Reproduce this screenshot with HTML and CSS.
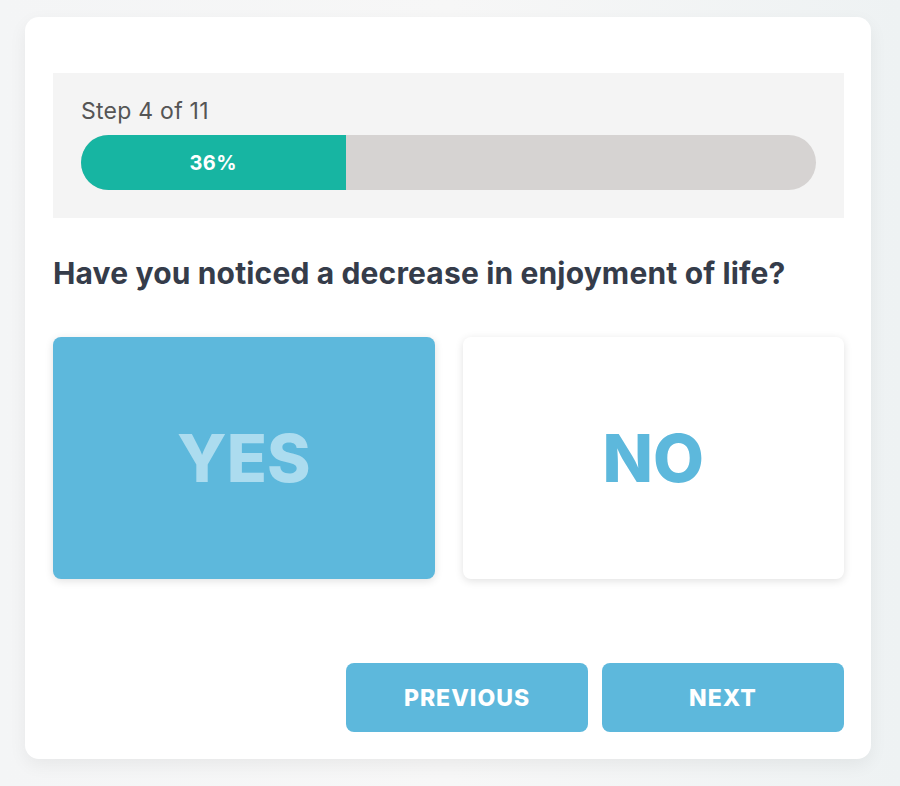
FILE: index.html
```html
<!DOCTYPE html>
<html>
<head>
<meta charset="utf-8">
<link rel="stylesheet" href="styles.css">
</head>
<body>
<div class="card">
  <div class="progress-panel">
    <div class="step">Step 4 of 11</div>
    <div class="track">
      <div class="fill" style="width:36%">36%</div>
    </div>
  </div>
  <h1 class="question">Have you noticed a decrease in enjoyment of life?</h1>
  <div class="options">
    <div class="option selected">YES</div>
    <div class="option">NO</div>
  </div>
  <div class="nav">
    <button class="btn">PREVIOUS</button>
    <button class="btn">NEXT</button>
  </div>
</div>
</body>
</html>
```

FILE: styles.css
```css
html, body {
  margin: 0;
  padding: 0;
}
body {
  width: 900px;
  height: 786px;
  overflow: hidden;
  background: linear-gradient(90deg, #f4f5f6 0%, #f7f7f7 50%, #eef2f3 100%);
  font-family: Inter, "Liberation Sans", sans-serif;
  padding-top: 17px;
  box-sizing: border-box;
}
.card {
  margin-left: 25px;
  width: 846px;
  height: 742px;
  box-sizing: border-box;
  background: #fff;
  border-radius: 14px;
  box-shadow: 0 6px 18px rgba(0,0,0,0.06);
  padding: 56px 27px 0 28px;
}
.progress-panel {
  background: #f4f4f4;
  height: 145px;
  box-sizing: border-box;
  padding: 24px 28px 0 28px;
}
.step {
  font-size: 23px;
  letter-spacing: 0.25px;
  color: #555;
  line-height: 28px;
  height: 38px;
}
.track {
  height: 55px;
  background: #d6d3d2;
  border-radius: 28px;
  overflow: hidden;
  display: flex;
}
.fill {
  background: #17b5a2;
  color: #fff;
  font-weight: 700;
  font-size: 20px;
  letter-spacing: 0.5px;
  display: flex;
  align-items: center;
  justify-content: center;
}
.question {
  margin: 37px 0 0 0;
  font-size: 30px;
  font-weight: 700;
  color: #353c4a;
  letter-spacing: 0.15px;
  line-height: 36px;
  height: 36px;
}
.options {
  margin-top: 46px;
  display: flex;
  gap: 28px;
}
.option {
  flex: 1;
  height: 242px;
  border-radius: 8px;
  background: #fff;
  box-shadow: 0 2px 8px rgba(0,0,0,0.12);
  display: flex;
  align-items: center;
  justify-content: center;
  font-size: 66px;
  font-weight: 800;
  color: #5db8dc;
}
.option.selected {
  background: #5db8dc;
  color: #acdcef;
}
.nav {
  margin-top: 84px;
  display: flex;
  justify-content: flex-end;
  gap: 14px;
}
.btn {
  width: 242px;
  height: 69px;
  border: none;
  border-radius: 8px;
  background: #5db8dc;
  color: #fff;
  font-family: Inter, "Liberation Sans", sans-serif;
  font-size: 23px;
  font-weight: 800;
  letter-spacing: 1px;
}
```
